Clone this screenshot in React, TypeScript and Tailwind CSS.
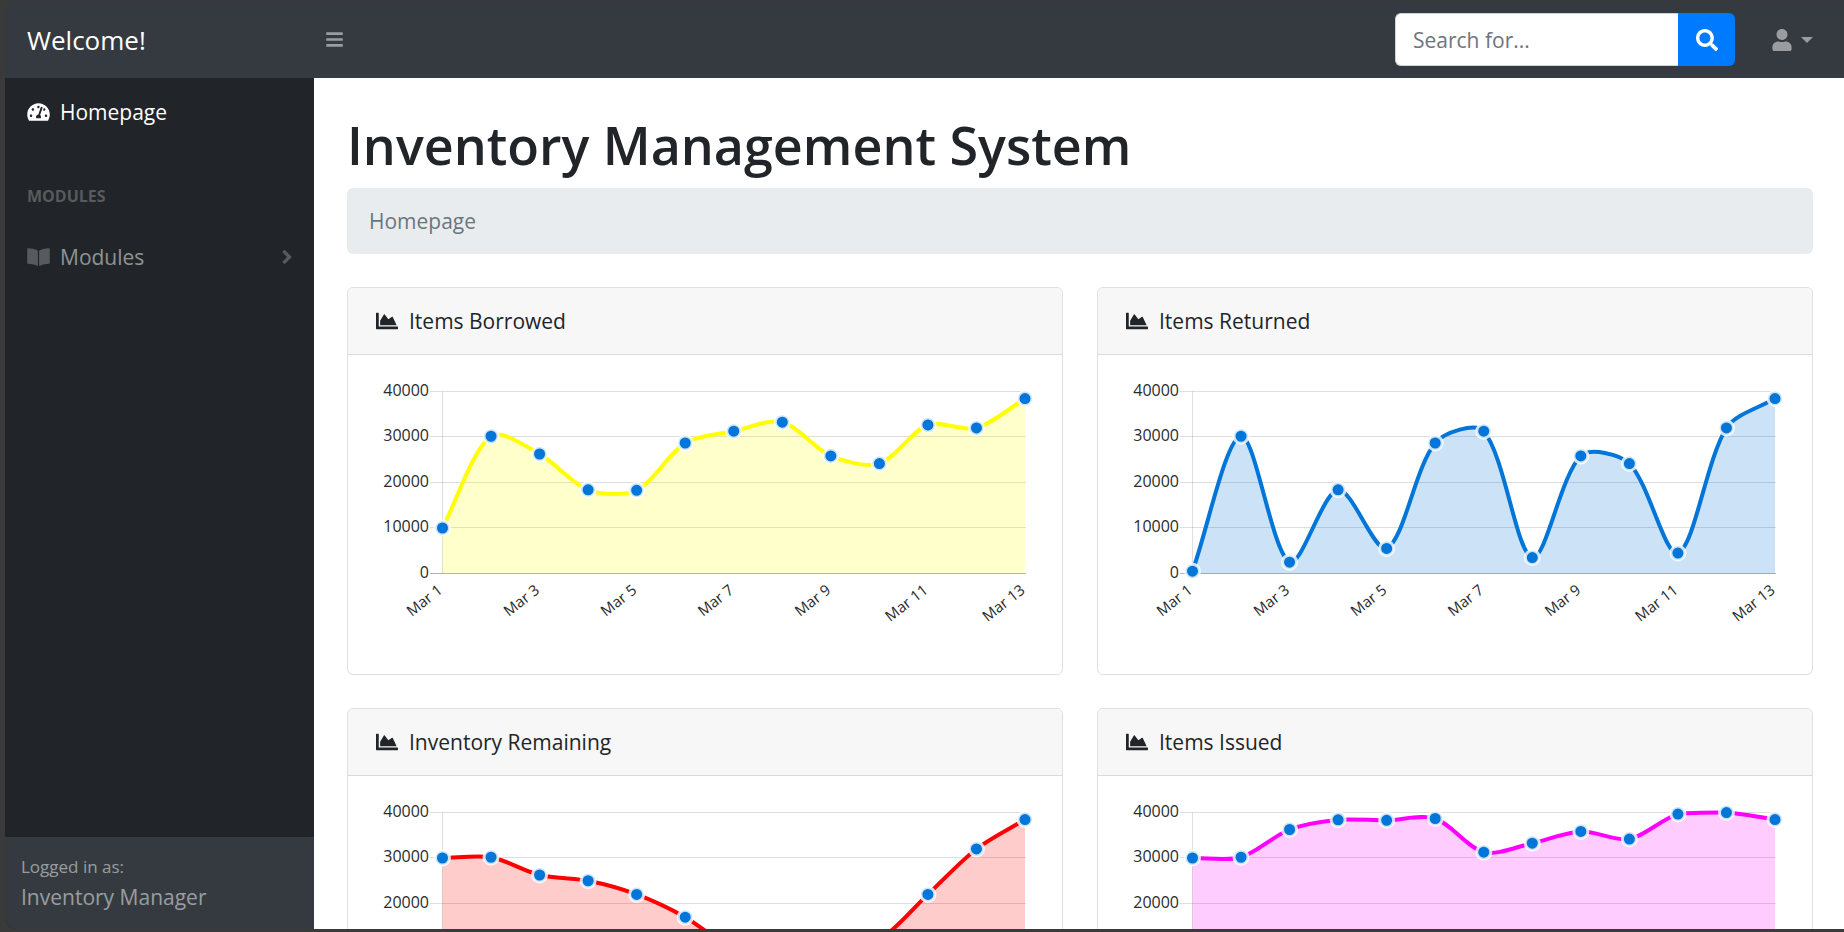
import React from "react";
import {
  FaAngleRight,
  FaBars,
  FaBookOpen,
  FaChartArea,
  FaSearch,
  FaTachometerAlt,
  FaUser,
} from "react-icons/fa";

type Series = {
  title: string;
  line: string;
  fill: string;
  values: number[];
};

const charts: Series[] = [
  {
    title: "Items Borrowed",
    line: "#ffff00",
    fill: "rgba(255,255,0,0.2)",
    values: [10000, 30162, 26263, 18394, 18287, 28682, 31274, 33259, 25849, 24159, 32651, 31984, 38451],
  },
  {
    title: "Items Returned",
    line: "#0275d8",
    fill: "rgba(2,117,216,0.2)",
    values: [500, 30162, 2500, 18394, 5500, 28682, 31274, 3500, 25849, 24159, 4500, 31984, 38451],
  },
  {
    title: "Inventory Remaining",
    line: "#ff0000",
    fill: "rgba(255,0,0,0.2)",
    values: [30000, 30162, 26263, 25000, 22000, 17000, 10000, 8000, 9000, 12000, 22000, 31984, 38451],
  },
  {
    title: "Items Issued",
    line: "#ff00ff",
    fill: "rgba(255,0,255,0.2)",
    values: [30000, 30162, 36263, 38394, 38287, 38682, 31274, 33259, 35849, 34159, 39651, 39984, 38451],
  },
];

const AREA = { left: 67.5, right: 650, top: 8.5, bottom: 190.5 };
const MAX = 40000;
const TENSION = 0.3;

type Point = { x: number; y: number };

const clampY = (y: number) => Math.min(AREA.bottom, Math.max(AREA.top, y));

function toPoints(values: number[]): Point[] {
  const step = (AREA.right - AREA.left) / (values.length - 1);
  return values.map((v, i) => ({
    x: AREA.left + i * step,
    y: AREA.bottom - (v / MAX) * (AREA.bottom - AREA.top),
  }));
}

// Cardinal spline whose handles are weighted by the distance to each neighbour.
function curve(points: Point[]): string {
  const handles = points.map((p, i) => {
    const prev = points[i - 1] ?? p;
    const next = points[i + 1] ?? p;
    const d01 = Math.hypot(p.x - prev.x, p.y - prev.y);
    const d12 = Math.hypot(next.x - p.x, next.y - p.y);
    const a = (TENSION * d01) / (d01 + d12);
    const b = (TENSION * d12) / (d01 + d12);
    const dx = next.x - prev.x;
    const dy = next.y - prev.y;
    return {
      before: { x: p.x - a * dx, y: clampY(p.y - a * dy) },
      after: { x: p.x + b * dx, y: clampY(p.y + b * dy) },
    };
  });
  return points
    .map((p, i) => {
      if (i === 0) return `M${p.x},${p.y}`;
      const c1 = handles[i - 1].after;
      const c2 = handles[i].before;
      return `C${c1.x},${c1.y} ${c2.x},${c2.y} ${p.x},${p.y}`;
    })
    .join(" ");
}

function AreaChart({ title, line, fill, values }: Series) {
  const points = toPoints(values);
  const path = curve(points);
  const ticks = [
    { value: 40000, y: 8.5 },
    { value: 30000, y: 53.5 },
    { value: 20000, y: 99.5 },
    { value: 10000, y: 144.5 },
    { value: 0, y: 190.5 },
  ];
  return (
    <svg viewBox="0 0 660 264" className="block w-full overflow-visible" role="img" aria-label={title}>
      {ticks.map((t) => (
        <g key={t.value}>
          <line
            x1="55"
            x2="651"
            y1={t.y}
            y2={t.y}
            stroke={t.value === 0 ? "rgba(0,0,0,0.3)" : "rgba(0,0,0,0.13)"}
          />
          <text x="54" y={t.y + 4} textAnchor="end" fontSize="16" fill="#292b2c">
            {t.value}
          </text>
        </g>
      ))}
      <line x1={AREA.left} x2={AREA.left} y1={AREA.top} y2={AREA.bottom} stroke="rgba(0,0,0,0.13)" />
      <path d={`${path} L${AREA.right},${AREA.bottom} L${AREA.left},${AREA.bottom} Z`} fill={fill} />
      <path d={path} fill="none" stroke={line} strokeWidth="4" />
      {points.map((p, i) => (
        <circle key={i} cx={p.x} cy={p.y} r="7" fill="#0275d8" stroke="rgba(255,255,255,0.8)" strokeWidth="3" />
      ))}
      {points.map((p, i) =>
        i % 2 === 0 ? (
          <text
            key={i}
            transform={`translate(${p.x + 1} 209) rotate(-38)`}
            textAnchor="end"
            fontSize="15"
            fill="#292b2c"
          >
            {`Mar ${i + 1}`}
          </text>
        ) : null,
      )}
    </svg>
  );
}

function ChartCard(props: Series) {
  return (
    <section className="rounded-md border border-[#dfdfdf] bg-white">
      <h2 className="flex h-[67px] items-center gap-[11px] rounded-t-md border-b border-[#dadada] bg-[#f7f7f7] px-7">
        <FaChartArea size={22} />
        {props.title}
      </h2>
      <div className="px-[27px] pt-7 pb-[27px]">
        <AreaChart {...props} />
      </div>
    </section>
  );
}

export default function App() {
  return (
    <div className="h-screen bg-[#3a3a3a] pt-px pb-[3px] pl-[5px] font-['Open_Sans','Noto_Sans',sans-serif] text-[21px] leading-8 text-[#212529]">
      <div className="flex h-full flex-col overflow-hidden rounded-l-xl bg-[#343a40]">
        <header className="flex h-[77px] shrink-0 items-center bg-[#343a40] pr-[31px]">
          <a href="#" className="w-[309px] pl-[22px] text-[26px] text-white">
            Welcome!
          </a>
          <button type="button" aria-label="Toggle sidebar" className="px-[11px] text-white/50">
            <FaBars size={19} />
          </button>
          <form className="ml-auto flex" onSubmit={(e) => e.preventDefault()}>
            <input
              type="text"
              aria-label="Search for..."
              placeholder="Search for..."
              className="h-[53px] w-[283px] rounded-l-md border border-r-0 border-[#ced4da] bg-white px-[17px] outline-none placeholder:text-[#6c757d]"
            />
            <button
              type="submit"
              aria-label="Search"
              className="flex w-[57px] items-center justify-center rounded-r-md bg-[#007bff] text-white"
            >
              <FaSearch size={22} />
            </button>
          </form>
          <button type="button" aria-label="User menu" className="ml-9 flex items-center gap-2 text-white/50">
            <FaUser size={22} />
            <svg width="12" height="6" viewBox="0 0 12 6" fill="currentColor" aria-hidden="true">
              <path d="M0 0h12L6 6z" />
            </svg>
          </button>
        </header>

        <div className="flex min-h-0 flex-1">
          <aside className="flex w-[309px] shrink-0 flex-col bg-[#212529]">
            <nav className="flex-1">
              <a href="#" className="flex h-[68px] items-center gap-2.5 pr-4 pl-[22px] text-white">
                <FaTachometerAlt size={20} className="w-[23px]" />
                Homepage
              </a>
              <h2 className="px-[22px] pt-[38px] pb-[15px] text-base leading-6 font-bold text-white/25">
                MODULES
              </h2>
              <a href="#" className="flex h-[68px] items-center gap-2.5 pr-4 pl-[22px] text-white/50">
                <FaBookOpen size={20} className="w-[23px] text-white/25" />
                Modules
                <FaAngleRight size={22} className="ml-auto text-white/25" />
              </a>
            </nav>
            <footer className="bg-[#343a40] px-4 py-4 text-white/50">
              <div className="text-[17px] leading-7">Logged in as:</div>
              <div>Inventory Manager</div>
            </footer>
          </aside>

          <main className="min-w-0 flex-1 overflow-y-auto bg-white pt-[33px] pr-[31px] pl-[33px] [scrollbar-width:none]">
            <h1 className="text-[52px] leading-[68px] font-semibold">Inventory Management System</h1>
            <ol className="mt-[9px] flex h-[66px] items-center rounded-md bg-[#e9ecef] px-[22px] text-[#6c757d]">
              <li>Homepage</li>
            </ol>
            <div className="my-[33px] grid grid-cols-2 gap-x-[34px] gap-y-[33px]">
              {charts.map((chart) => (
                <ChartCard key={chart.title} {...chart} />
              ))}
            </div>
          </main>
        </div>
      </div>
    </div>
  );
}
